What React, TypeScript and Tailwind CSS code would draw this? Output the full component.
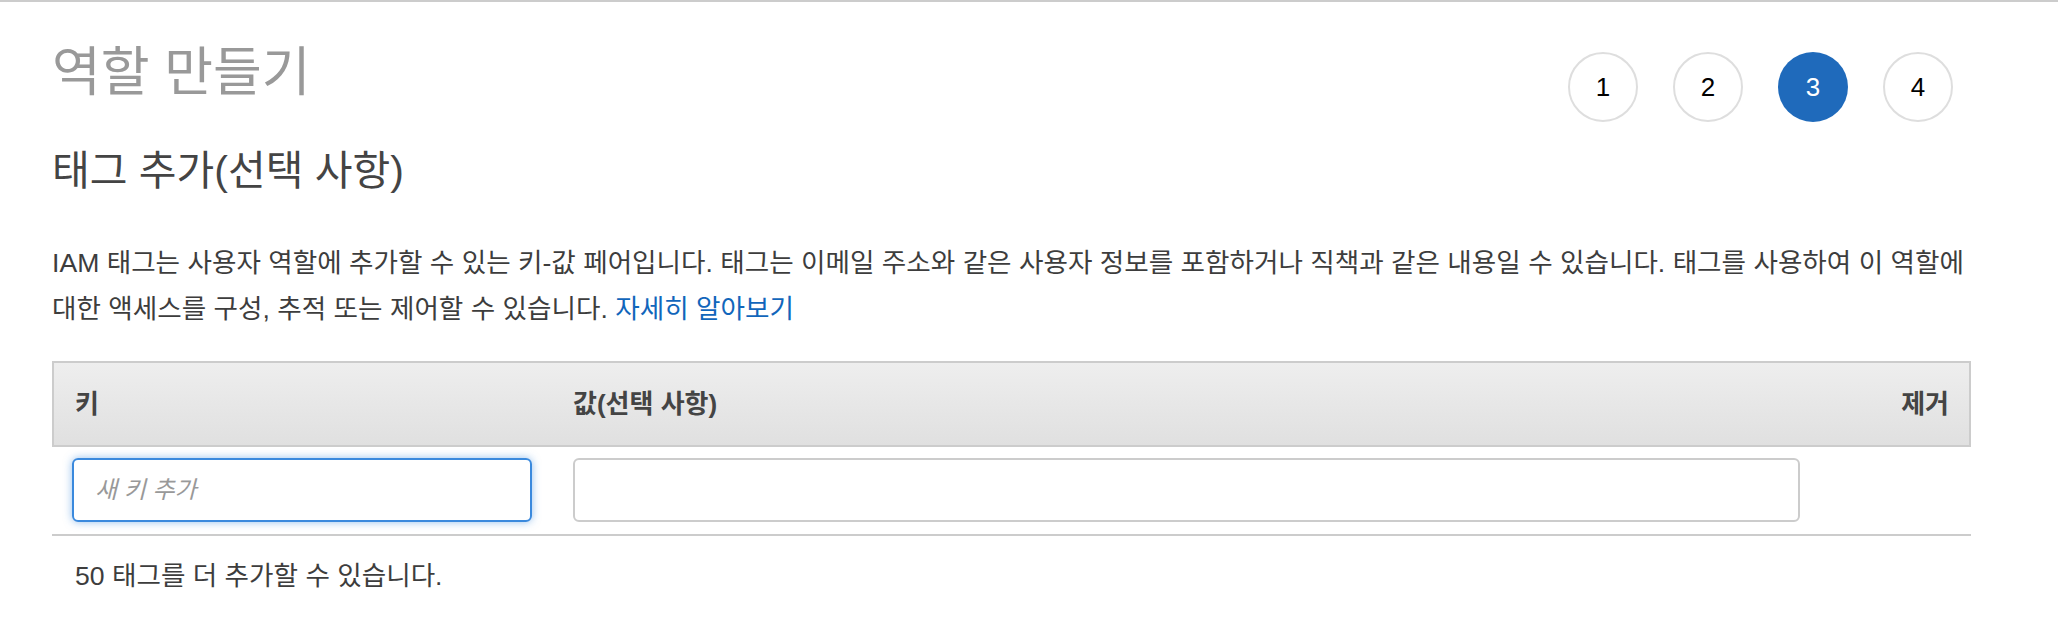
const steps = [1, 2, 3, 4];
const current = 3;

function StepCircle({ n }: { n: number }) {
  const active = n === current;
  return (
    <div
      className={`flex items-center justify-center w-[70px] h-[70px] rounded-full text-[26px] ${
        active ? 'bg-[#1f6abb] text-white' : 'bg-white border-2 border-[#dedede] text-black'
      }`}
    >
      {n}
    </div>
  );
}

export default function App() {
  return (
    <div className="min-h-[640px] w-full bg-white border-t-2 border-[#cccccc] font-['Liberation_Sans','Noto_Sans_CJK_KR',sans-serif]">
      <div className="pl-[52px] pr-[87px]">
        <div className="flex items-start justify-between pt-[43px]">
          <h1 className="text-[53px] leading-[56px] text-[#999999] font-normal">역할 만들기</h1>
          <div className="flex gap-[35px] mt-[7px] mr-[18px]">
            {steps.map((n) => (
              <StepCircle key={n} n={n} />
            ))}
          </div>
        </div>

        <h2 className="mt-[24px] text-[41px] leading-[50px] text-[#444444] font-normal">태그 추가(선택 사항)</h2>

        <p className="mt-[44px] text-[26.6px] leading-[46px] text-[#3d3d3d]">
          IAM 태그는 사용자 역할에 추가할 수 있는 키-값 페어입니다. 태그는 이메일 주소와 같은 사용자 정보를 포함하거나 직책과 같은 내용일 수 있습니다. 태그를 사용하여 이 역할에 대한 액세스를 구성, 추적 또는 제어할 수 있습니다.{' '}
          <a className="text-[#1166bb]">자세히 알아보기</a>
        </p>

        <div className="mt-[29px]">
          <div className="grid grid-cols-[498px_1268px_1fr] h-[86px] items-center border-2 border-[#cccccc] bg-gradient-to-b from-[#eeeeee] to-[#e0e0e0] text-[26px] font-bold text-[#444444]">
            <div className="pl-[21px]">키</div>
            <div className="pl-[21px]">값(선택 사항)</div>
            <div className="pr-[20px] text-right">제거</div>
          </div>

          <div className="grid grid-cols-[500px_1268px_1fr] pt-[11px] pb-[12px] border-b-2 border-[#cccccc]">
            <div className="px-[20px]">
              <input
                placeholder="새 키 추가"
                className="w-full h-[64px] px-[21px] rounded-[6px] border-2 border-[#3a89dd] shadow-[0_0_8px_rgba(58,137,221,0.55)] outline-none text-[24px] placeholder:italic placeholder:text-[#999999]"
              />
            </div>
            <div className="pl-[21px] pr-[20px]">
              <input className="w-full h-[64px] px-[21px] rounded-[6px] border-2 border-[#cccccc] outline-none text-[24px]" />
            </div>
            <div />
          </div>

          <p className="mt-[20px] pl-[23px] text-[26.6px] leading-[40px] text-[#3d3d3d]">50 태그를 더 추가할 수 있습니다.</p>
        </div>
      </div>
    </div>
  );
}
